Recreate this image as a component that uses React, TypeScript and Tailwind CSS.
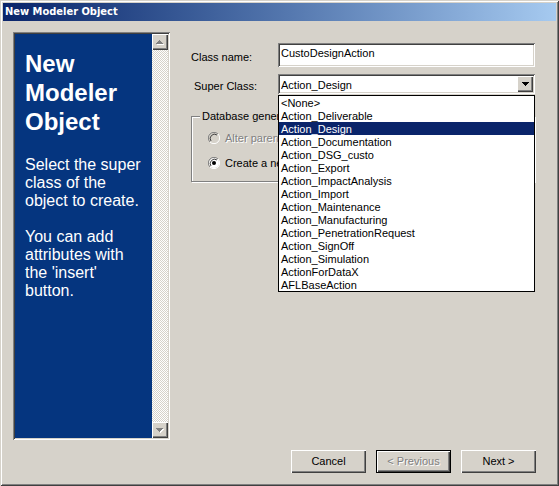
import { useState } from 'react';
import type { ReactNode } from 'react';

const classes = [
  '<None>',
  'Action_Deliverable',
  'Action_Design',
  'Action_Documentation',
  'Action_DSG_custo',
  'Action_Export',
  'Action_ImpactAnalysis',
  'Action_Import',
  'Action_Maintenance',
  'Action_Manufacturing',
  'Action_PenetrationRequest',
  'Action_SignOff',
  'Action_Simulation',
  'ActionForDataX',
  'AFLBaseAction',
];

const raised =
  'shadow-[inset_1px_1px_0_#ffffff,inset_-1px_-1px_0_#404040,inset_-2px_-2px_0_#808080]';
const sunken =
  'shadow-[inset_1px_1px_0_#808080,inset_-1px_-1px_0_#ffffff,inset_2px_2px_0_#404040,inset_-2px_-2px_0_#d6d2ca]';

function ScrollButton({ label, down = false }: { label: string; down?: boolean }) {
  return (
    <button type="button" aria-label={label} className={`flex h-4 w-4 items-center justify-center bg-[#d6d2ca] ${raised}`}>
      <svg width="8" height="5" viewBox="0 0 8 5" shapeRendering="crispEdges">
        <path d={down ? 'M1 1h7v1h-1v1h-1v1h-1v1h-1v-1h-1v-1h-1v-1h-1z' : 'M4 1h1v1h1v1h1v1h1v1h-7v-1h1v-1h1v-1h1z'} fill="#fff" />
        <path d={down ? 'M0 0h7v1h-1v1h-1v1h-1v1h-1v-1h-1v-1h-1v-1h-1z' : 'M3 0h1v1h1v1h1v1h1v1h-7v-1h1v-1h1v-1h1z'} fill="#808080" />
      </svg>
    </button>
  );
}

function RadioRow({ id, disabled = false, checked, onSelect, children }: { id: string; disabled?: boolean; checked: boolean; onSelect: () => void; children: ReactNode }) {
  return (
    <div className="flex h-[13px] items-center gap-[5px]">
      <span className="relative h-3 w-3 shrink-0">
        <input
          id={id}
          type="radio"
          name="table"
          disabled={disabled}
          checked={checked}
          onChange={onSelect}
          className="block h-3 w-3 appearance-none rounded-full"
        />
        <svg className="pointer-events-none absolute inset-0" width="12" height="12" viewBox="0 0 12 12">
          <circle cx="6" cy="6" r="5" fill={disabled ? '#d6d2ca' : '#fff'} />
          <path d="M2 10A5.5 5.5 0 0 1 10 2" fill="none" stroke="#808080" />
          <path d="M3 9A4.3 4.3 0 0 1 9 3" fill="none" stroke="#404040" />
          <path d="M10 2A5.5 5.5 0 0 1 2 10" fill="none" stroke="#fff" />
          {checked && <circle cx="6" cy="6" r="2" fill="#000" />}
        </svg>
      </span>
      <label htmlFor={id} className={`pt-[2px] whitespace-nowrap ${disabled ? 'text-[#808080] [text-shadow:1px_1px_0_#fff]' : ''}`}>
        {children}
      </label>
    </div>
  );
}

export default function App() {
  const [name, setName] = useState('CustoDesignAction');
  const [parent, setParent] = useState('Action_Design');
  const [table, setTable] = useState('new');

  return (
    <div className="flex min-h-screen flex-col bg-[#d6d2ca] p-[3px] font-['Liberation_Sans',Arial,sans-serif] text-[11px] leading-[13px] text-black shadow-[inset_1px_1px_0_#d6d2ca,inset_-1px_-1px_0_#404040,inset_2px_2px_0_#ffffff,inset_-2px_-2px_0_#808080]">
      <header className="flex h-[18px] items-center bg-linear-to-r from-[#0a246a] to-[#a6caf0] px-[2px] pb-[2px]">
        <h1 className="font-['DejaVu_Sans_Condensed','DejaVu_Sans',sans-serif] font-bold text-white">New Modeler Object</h1>
      </header>

      <main className="flex flex-1 pt-[11px] pr-[21px] pl-[10px]">
        <aside className={`flex w-[157px] shrink-0 p-[2px] ${sunken}`}>
          <div className="flex-1 bg-[#05357f] pt-[15px] pl-[10px] text-base leading-[18px] text-white">
            <h2 className="text-2xl leading-[29px] font-bold">New<br />Modeler<br />Object</h2>
            <p className="mt-5">Select the super<br />class of the<br />object to create.</p>
            <p className="mt-[18px]">You can add<br />attributes with<br />the 'insert'<br />button.</p>
          </div>
          <div className="flex w-4 flex-col justify-between bg-[conic-gradient(#ffffff_25%,#d6d2ca_0_50%,#ffffff_0_75%,#d6d2ca_0)] bg-[length:2px_2px]">
            <ScrollButton label="Scroll up" />
            <ScrollButton label="Scroll down" down />
          </div>
        </aside>

        <form className="ml-[21px] min-w-0 flex-1 pt-[11px]">
          <div className="grid grid-cols-[87px_1fr] items-center gap-y-[7px]">
            <label htmlFor="class-name" className="pt-1">Class name:</label>
            <input
              id="class-name"
              value={name}
              onChange={(e) => setName(e.target.value)}
              className={`h-6 w-full min-w-0 bg-white px-[3px] pb-1 outline-none ${sunken}`}
            />
            <label htmlFor="super-class" className="pt-1 pl-[3px]">Super Class:</label>
            <div className="relative">
              <select
                id="super-class"
                value={parent}
                onChange={(e) => setParent(e.target.value)}
                className={`block h-5 w-full appearance-none bg-white px-[3px] pt-[3px] outline-none ${sunken}`}
              >
                {classes.map((c) => <option key={c}>{c}</option>)}
              </select>
              <span className={`pointer-events-none absolute top-[2px] right-[2px] flex h-4 w-4 items-center justify-center bg-[#d6d2ca] ${raised}`}>
                <svg width="7" height="4" viewBox="0 0 7 4" shapeRendering="crispEdges">
                  <path d="M0 0h7v1h-1v1h-1v1h-1v1h-1v-1h-1v-1h-1v-1h-1z" />
                </svg>
              </span>
              <ul role="listbox" aria-label="Super Class" className="absolute top-full right-0 left-0 z-10 mt-px border border-black bg-white">
                {classes.map((c) => (
                  <li
                    key={c}
                    role="option"
                    aria-selected={c === parent}
                    onClick={() => setParent(c)}
                    className={`h-[13px] px-[2px] pt-px ${c === parent ? 'bg-[#0a246a] text-white' : ''}`}
                  >
                    {c}
                  </li>
                ))}
              </ul>
            </div>
          </div>

          <fieldset className="mt-4 border border-[#808080] px-4 pt-2 pb-3 shadow-[1px_1px_0_#ffffff,inset_1px_1px_0_#ffffff]">
            <legend className="-ml-2 bg-[#d6d2ca] px-[2px]">Database generation</legend>
            <div className="flex flex-col gap-3">
              <RadioRow id="alter" disabled checked={table === 'alter'} onSelect={() => setTable('alter')}>Alter parent</RadioRow>
              <RadioRow id="create" checked={table === 'new'} onSelect={() => setTable('new')}>Create a new</RadioRow>
            </div>
          </fieldset>
        </form>
      </main>

      <footer className="flex justify-end gap-[10px] pt-[10px] pr-5 pb-[10px]">
        <button type="button" className={`h-[23px] w-[75px] ${raised}`}>Cancel</button>
        <button type="button" disabled className="h-[23px] w-[75px] border border-black text-[#808080] shadow-[inset_1px_1px_0_#ffffff,inset_-1px_-1px_0_#404040,inset_-2px_-2px_0_#808080] [text-shadow:1px_1px_0_#fff]">&lt; Previous</button>
        <button type="button" className={`h-[23px] w-[75px] ${raised}`}>Next &gt;</button>
      </footer>
    </div>
  );
}
